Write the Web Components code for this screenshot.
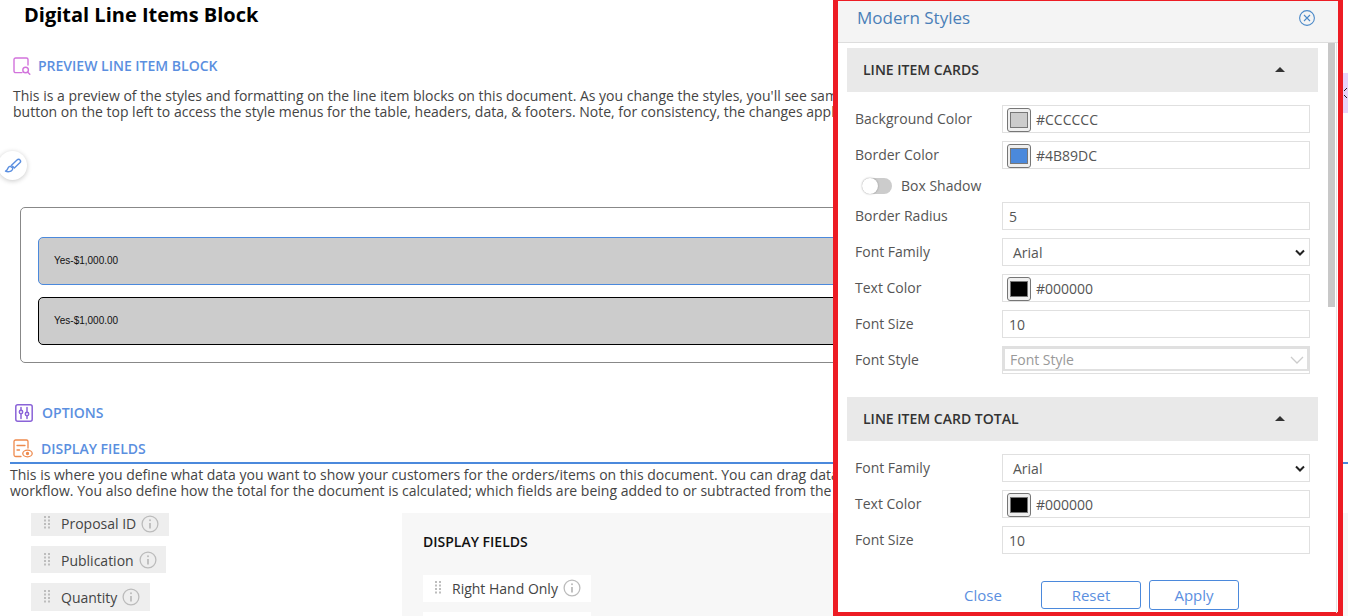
<!DOCTYPE html>
<html><head><meta charset="utf-8">
<style>
html,body{margin:0;height:616px;overflow:hidden;background:#fff;font-family:"Open Sans",sans-serif;}
</style></head><body>
<app-page></app-page>
<template id="t-page">
<style>
:host{display:block;position:relative;width:1348px;height:616px;overflow:hidden;color:#444;font:14px/16px "Open Sans",sans-serif}
h1{margin:0;padding:3px 0 0 24px;font-size:20px;line-height:24px;font-weight:700;color:#000}
.desc{white-space:nowrap;color:#444;font-size:14px;line-height:16px}
.d1{margin:13px 0 0 13px}
.d2{margin:3px 0 0 10px}
.brushwrap{height:87px;}
.box{margin-left:20px;width:1000px;height:156px;box-sizing:border-box;border:1px solid #888;border-radius:5px;padding:29px 17px;display:flex;flex-direction:column;gap:12px}
.fields{display:flex;margin-top:6px;height:130px;overflow:hidden}
.left{margin:8px 0 0 31px;width:371px;display:flex;flex-direction:column;gap:10px;align-items:flex-start;flex:none}
.right{margin-top:8px;flex:1;background:#f7f7f7;padding:19px 21px}
.right h3{margin:0 0 23px;font-size:14px;line-height:20px;font-weight:600;color:#111}
.rlist{display:flex;flex-direction:column;gap:10px;align-items:flex-start}
.fab{position:absolute;left:-2px;top:151px;width:29px;height:29px;border-radius:50%;background:#fff;box-shadow:0 1px 5px rgba(0,0,0,.22);display:flex;align-items:center;justify-content:center}
.tab{position:absolute;left:1343px;top:73px;width:5px;height:40px;background:#e8d4fb;overflow:hidden}
.tab svg{display:block;margin-top:14px}
</style>
<h1>Digital Line Items Block</h1>
<sec-head style="margin:30px 0 0 13px" gap="7">
<svg slot="icon" width="18" height="18" viewBox="0 0 18 18" fill="none" stroke="#d273dc" stroke-width="1.4" stroke-linecap="round"><path d="M9 15.6H2.6A1.6 1.6 0 0 1 1 14V2.6A1.6 1.6 0 0 1 2.6 1h10.8A1.6 1.6 0 0 1 15 2.6V8"/><circle cx="12.6" cy="13" r="2.8"/><path d="M14.8 15.2l2 2.1"/></svg>
PREVIEW LINE ITEM BLOCK</sec-head>
<div class="desc d1">This is a preview of the styles and formatting on the line item blocks on this document. As you change the styles, you'll see same changes here.<br>button on the top left to access the style menus for the table, headers, data, &amp; footers. Note, for consistency, the changes apply to all blocks.</div>
<div class="brushwrap"></div>
<div class="box">
<line-card style="--bc:#4b89dc">Yes-$1,000.00</line-card>
<line-card style="--bc:#000">Yes-$1,000.00</line-card>
</div>
<sec-head style="margin:41px 0 0 15px" gap="9">
<svg slot="icon" width="18" height="18" viewBox="0 0 18 18" fill="none" stroke="#8a63d8" stroke-width="1.5" stroke-linecap="round"><rect x=".8" y=".8" width="16.4" height="16.4" rx="2"/><path d="M6 3.5v3M6 10v4.500M12 3.500v5M12 12v2.500"/><circle cx="6" cy="8" r="1.700"/><circle cx="12" cy="10" r="1.700"/></svg>
OPTIONS</sec-head>
<sec-head style="margin:17px 0 0 13px" gap="8">
<svg slot="icon" width="20" height="19" viewBox="0 0 20 19" fill="none" stroke="#ee8a4d" stroke-width="1.300" stroke-linecap="round"><path d="M8 17.500H2.600A1.600 1.600 0 0 1 1 16V2.600A1.600 1.600 0 0 1 2.600 1h10.800A1.600 1.600 0 0 1 15 2.600V9"/><path d="M4 6.500h8M4 11h2.500"/><ellipse cx="14.500" cy="14.500" rx="4.700" ry="3.300"/><circle cx="14.500" cy="14.500" r="1" fill="#ee8a4d"/></svg>
DISPLAY FIELDS</sec-head>
<rule-line></rule-line>
<div class="desc d2">This is where you define what data you want to show your customers for the orders/items on this document. You can drag data fields from the left to the right.<br>workflow. You also define how the total for the document is calculated; which fields are being added to or subtracted from the total for this block.</div>
<div class="fields">
<div class="left">
<field-chip style="--h:23px;--w:138px;--bg:#eee;--o:-2px">Proposal ID</field-chip>
<field-chip style="--h:27px;--w:135px;--bg:#eee;--t:3px">Publication</field-chip>
<field-chip style="--h:28px;--w:119px;--bg:#eee;--t:2px">Quantity</field-chip>
</div>
<div class="right">
<h3>DISPLAY FIELDS</h3>
<div class="rlist">
<field-chip style="--h:27px;--w:168px;--bg:#fff;--t:1px;--pl:12px">Right Hand Only</field-chip>
<field-chip style="--h:27px;--w:168px;--bg:#fff"></field-chip>
</div>
</div>
</div>
<div class="fab"><svg width="20" height="18" viewBox="0 0 20 18" fill="none" stroke="#5b8fe0" stroke-width="1.400" stroke-linejoin="round"><path d="M8.500 8.200l5.500-5.300c1-.9 2.300-.9 3 0 .8.800.7 2-.2 2.900l-5.400 5.100z"/><path d="M7.300 9.200c-1.300.2-2.200 1-2.500 2.300-.2.900-.8 2-2.300 2.700 2.200 1 5.400.6 6.600-1 .6-.8.800-1.600.5-2.300z"/></svg></div>
<div class="tab"><svg width="5" height="12" viewBox="0 0 5 12" fill="none" stroke="#222" stroke-width="1"><path d="M4 1L1 4M1 8l3 3"/></svg></div>
<style-panel></style-panel>
</template>

<template id="t-sec">
<style>:host{display:flex;align-items:center;font-size:14px;line-height:18px;font-weight:600;color:#5b8fe0}
.i{display:flex;flex:none}</style>
<span class="i" id="i"><slot name="icon"></slot></span><slot></slot>
</template>

<template id="t-rule">
<style>:host{display:block;height:2px;margin:4px 0 0 10px;background:#4b89dc}</style>
</template>

<template id="t-card">
<style>:host{display:flex;align-items:center;box-sizing:border-box;height:48px;width:100%;flex:none;background:#ccc;border:1px solid var(--bc);border-radius:5px;padding:0 15px;font:10px/12px "Liberation Sans",Arial,sans-serif;color:#111}</style>
<slot></slot>
</template>

<template id="t-chip">
<style>:host{display:flex;align-items:center;box-sizing:border-box;height:var(--h);width:var(--w);background:var(--bg);padding-left:var(--pl,13px);padding-top:var(--t,0);font-size:14px;line-height:18px;color:#444;flex:none}
.g{flex:none;margin-right:10px;margin-top:-4px}
.n{margin-right:5px;margin-top:var(--o,0)}
.inf{flex:none;margin-top:-2px}
:host([empty]) .inf,:host([empty]) .g{display:none}
</style>
<svg class="g" width="7" height="13" viewBox="0 0 7 13" fill="#bdbdbd"><rect x="0" y="0" width="2" height="2"/><rect x="4" y="0" width="2" height="2"/><rect x="0" y="3.500" width="2" height="2"/><rect x="4" y="3.500" width="2" height="2"/><rect x="0" y="7" width="2" height="2"/><rect x="4" y="7" width="2" height="2"/><rect x="0" y="10.500" width="2" height="2"/><rect x="4" y="10.500" width="2" height="2"/></svg>
<span class="n"><slot></slot></span>
<svg class="inf" width="18" height="18" viewBox="0 0 18 18" fill="none" stroke="#bbb" stroke-width="1.300"><circle cx="9" cy="9" r="7.900"/><path d="M9 8v5.500" stroke-width="1.800"/><circle cx="9" cy="5.200" r="1" fill="#bbb" stroke="none"/></svg>
</template>

<template id="t-panel">
<style>
:host{position:absolute;left:833px;top:0;width:510px;height:616px;box-sizing:border-box;border:solid #ed1c24;border-width:1px 5px 4px 5px;background:#fff;display:flex;flex-direction:column;color:#555}
header{flex:none;height:42px;box-sizing:border-box;background:#f4f4f4;border-bottom:1px solid #ddd;display:flex;align-items:center;justify-content:space-between;padding:0 23px 7px 19px;font-size:17px;line-height:22px;color:#4a7fb8}
.body{flex:1;min-height:0;padding:5px 20px 0 9px;overflow:hidden;display:flex;flex-direction:column}
.rows{display:flex;flex-direction:column;gap:8px;padding:13px 8px 0 8px}
.rows.a{height:305px;box-sizing:border-box;flex:none}
.rows.b{flex:1}
.toggle{height:28px;margin:-5px 0 -6px;display:flex;align-items:center;gap:9px;padding-left:7px;font-size:14px}
.track{position:relative;width:30px;height:16px;border-radius:8px;background:#ccc;display:block}
.track:before{content:"";position:absolute;left:0;top:0;width:16px;height:16px;border-radius:50%;background:#fff;box-shadow:0 0 2px rgba(0,0,0,.35)}
footer{flex:none;height:31px;display:flex;align-items:flex-start;padding:0 0 0 117px;font-size:15px;color:#5b8fe0}
.close{width:77px;line-height:28px}
.btn{box-sizing:border-box;border:1px solid #4b89dc;border-radius:3px;display:flex;align-items:center;justify-content:center}
.thumb{position:absolute;left:490px;top:42px;width:7px;height:264px;background:#c8c8c8}
.track2{position:absolute;left:497.500px;top:42px;width:1px;height:570px;background:#e4e4e4}
</style>
<header><span>Modern Styles</span>
<svg width="16" height="16" viewBox="0 0 16 16" fill="none" stroke="#4b89c8" stroke-width="1.100"><circle cx="8" cy="8" r="7.400"/><path d="M5 5l6 6M11 5l-6 6"/></svg></header>
<div class="body">
<acc-head>LINE ITEM CARDS</acc-head>
<div class="rows a">
<form-row label="Background Color"><color-val color="#cccccc">#CCCCCC</color-val></form-row>
<form-row label="Border Color"><color-val color="#4b89dc">#4B89DC</color-val></form-row>
<div class="toggle"><span class="track"></span><span>Box Shadow</span></div>
<form-row label="Border Radius"><span>5</span></form-row>
<form-row label="Font Family"><select-val>Arial</select-val></form-row>
<form-row label="Text Color"><color-val color="#000000">#000000</color-val></form-row>
<form-row label="Font Size"><span>10</span></form-row>
<form-row label="Font Style"><multi-val>Font Style</multi-val></form-row>
</div>
<acc-head>LINE ITEM CARD TOTAL</acc-head>
<div class="rows b">
<form-row label="Font Family"><select-val>Arial</select-val></form-row>
<form-row label="Text Color"><color-val color="#000000">#000000</color-val></form-row>
<form-row label="Font Size"><span>10</span></form-row>
</div>
<footer>
<span class="close">Close</span>
<span class="btn" style="width:100px;height:28px;margin-right:8px">Reset</span>
<span class="btn" style="width:90px;height:30px;margin-top:-1px">Apply</span>
</footer>
</div>
<div class="track2"></div><div class="thumb"></div>
</template>

<template id="t-acc">
<style>:host{display:flex;flex:none;align-items:center;justify-content:space-between;height:44px;background:#e9e9e9;padding:0 33px 0 16px;font-size:14px;font-weight:600;color:#333}
.c{width:0;height:0;border:5px solid transparent;border-top:0;border-bottom:5px solid #333;margin-top:-1px}</style>
<span><slot></slot></span><span class="c"></span>
</template>

<template id="t-row">
<style>:host{display:flex;align-items:center;height:28px;font-size:14px;color:#555}
.l{width:147px;flex:none;margin-top:-1px}
.v{width:308px;height:100%;box-sizing:border-box;border:1px solid #e0e0e0;display:flex;align-items:center;padding-left:6px;padding-top:1px;color:#555}</style>
<span class="l" id="l"></span><div class="v"><slot></slot></div>
</template>

<template id="t-color">
<style>:host{display:flex;align-items:center;gap:5px;color:#555;margin-left:-2px}
.b{box-sizing:border-box;width:24px;height:24px;border:1px solid #767676;border-radius:3px;background:#efefef;padding:3px 2px;display:flex}
.s{flex:1;box-sizing:border-box;border:1px solid #777}</style>
<span class="b"><span class="s" id="s"></span></span><slot></slot>
</template>

<template id="t-select">
<style>:host{flex:1;display:flex;align-items:center;justify-content:space-between;padding:0 3px 0 4px;color:#555}</style>
<span><slot></slot></span>
<svg width="12" height="8" viewBox="0 0 12 8" fill="none" stroke="#222" stroke-width="2"><path d="M2 1.500l4 4 4-4"/></svg>
</template>

<template id="t-multi">
<style>:host{flex:1;align-self:stretch;box-sizing:border-box;margin:-1px 0 2px -6px;border:2px solid #e0e0e0;display:flex;align-items:center;justify-content:space-between;padding:1px 3px 0 5px;color:#999;position:relative}</style>
<span><slot></slot></span>
<svg width="14" height="8" viewBox="0 0 14 8" fill="none" stroke="#ccc" stroke-width="1.300"><path d="M1 1l6 6 6-6"/></svg>
</template>

<script>
function def(name,tid,init){customElements.define(name,class extends HTMLElement{constructor(){super();const r=this.attachShadow({mode:'open'});r.appendChild(document.getElementById(tid).content.cloneNode(true));}connectedCallback(){init&&init(this,this.shadowRoot);}});}
def('sec-head','t-sec',(h,r)=>{r.getElementById('i').style.marginRight=(h.getAttribute('gap')||8)+'px';});
def('rule-line','t-rule');
def('line-card','t-card');
def('field-chip','t-chip',(h)=>{if(!h.textContent.trim())h.setAttribute('empty','');});
def('acc-head','t-acc');
def('form-row','t-row',(h,r)=>{r.getElementById('l').textContent=h.getAttribute('label');});
def('color-val','t-color',(h,r)=>{r.getElementById('s').style.background=h.getAttribute('color');});
def('select-val','t-select');
def('multi-val','t-multi');
def('style-panel','t-panel');
def('app-page','t-page');
</script>
</body></html>
